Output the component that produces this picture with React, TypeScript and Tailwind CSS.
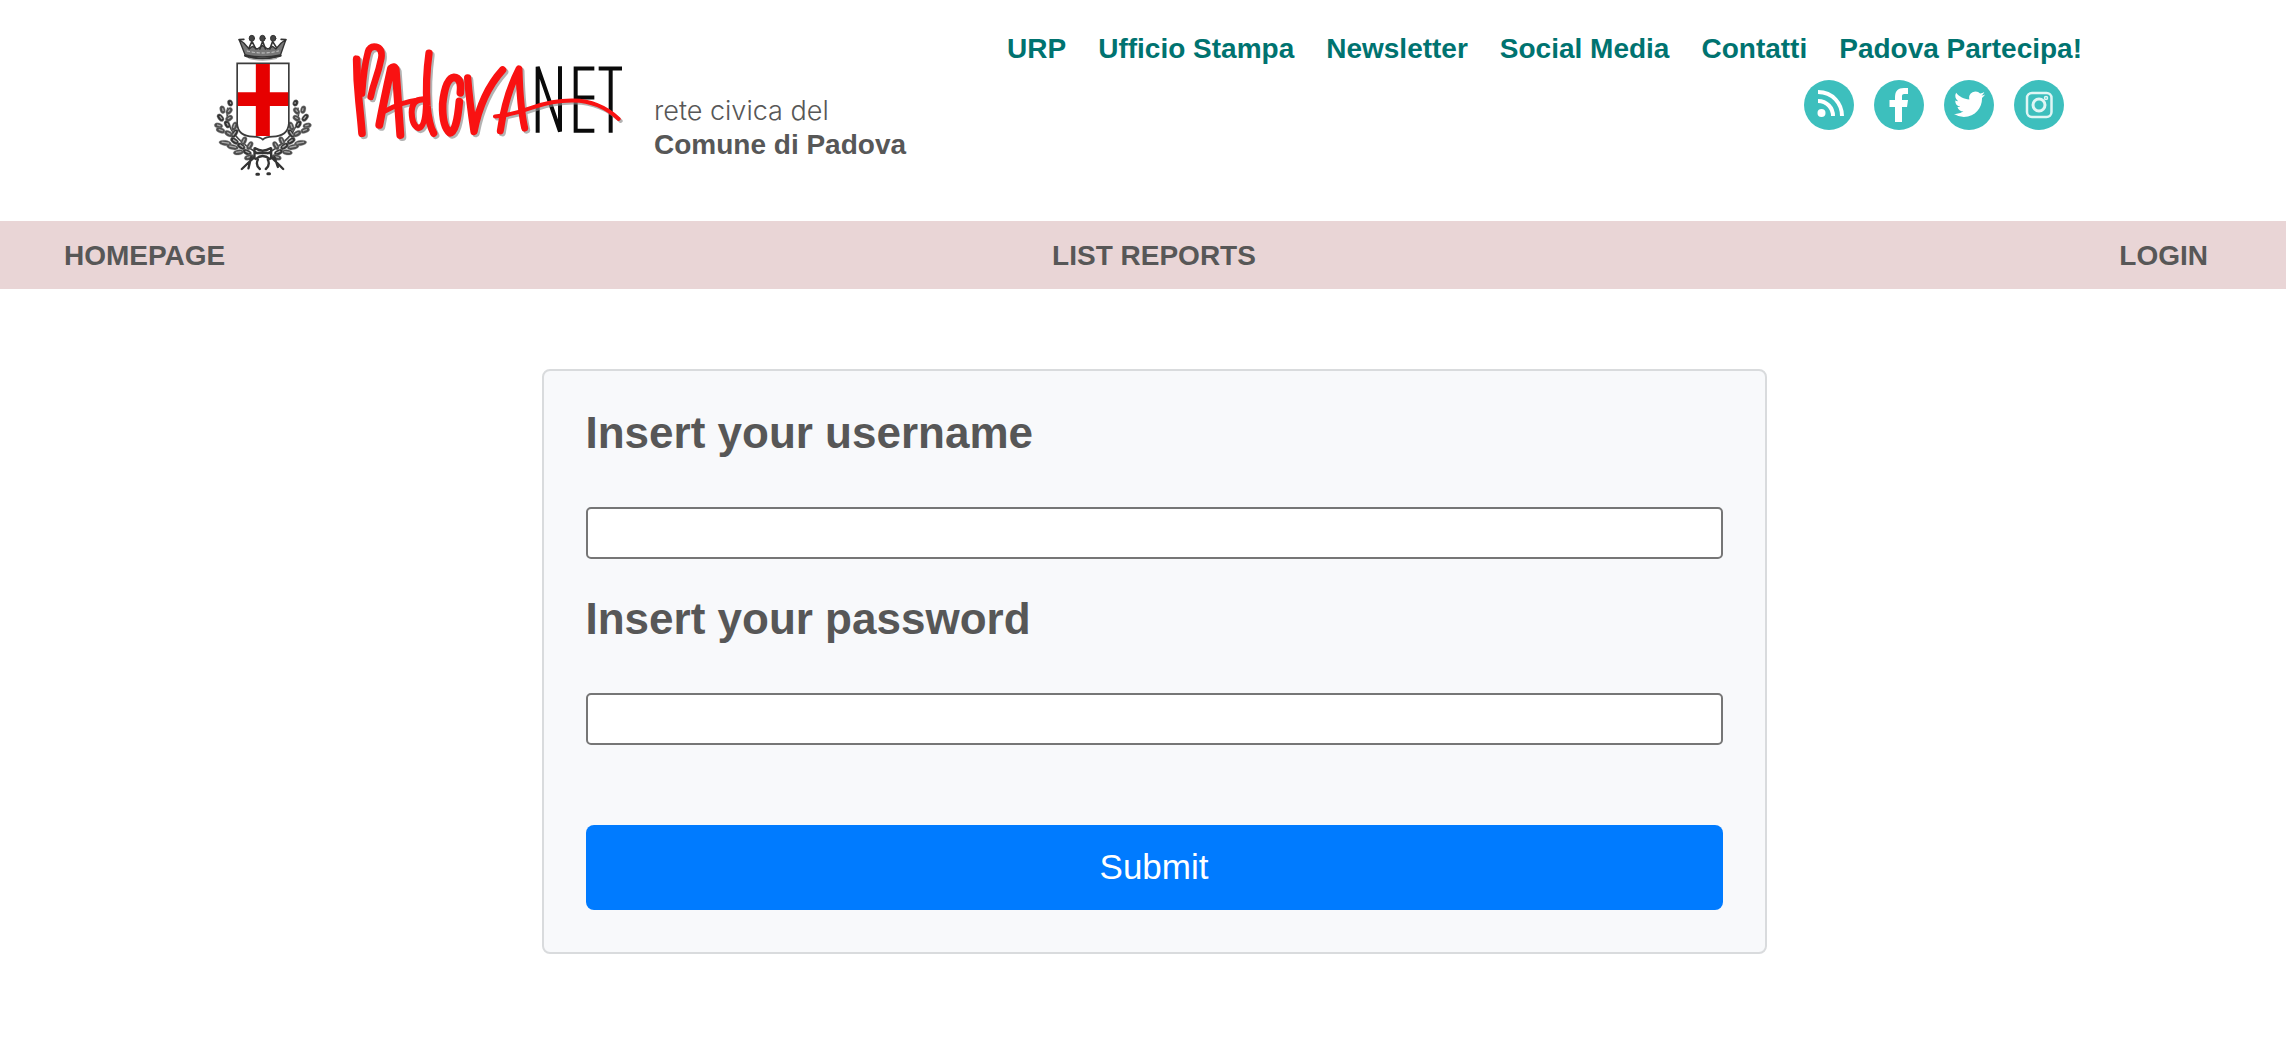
import React from "react";

const links = ["URP", "Ufficio Stampa", "Newsletter", "Social Media", "Contatti", "Padova Partecipa!"];

// Leaves of the left laurel branch: centre x, centre y, rotation, length
const leaves: [number, number, number, number][] = [
  [91, 248, 70, 10], [68, 268, 75, 12], [88, 272, -50, 12], [62, 292, 50, 13], [88, 294, -30, 12],
  [56, 316, 15, 13], [82, 312, 60, 12], [104, 318, -70, 14], [62, 330, 20, 14], [104, 340, -55, 15],
  [86, 340, 30, 13], [76, 368, 8, 19], [104, 362, 35, 14], [132, 362, -65, 14], [98, 380, 12, 18],
  [124, 378, 35, 14], [150, 376, -60, 14], [116, 396, -8, 16], [142, 396, 25, 14], [148, 411, -15, 15],
];

function Branch() {
  return (
    <g>
      <path d="M84 262C76 300 88 350 176 400" fill="none" stroke="#444" strokeWidth="5" />
      {leaves.map(([x, y, r, l], i) => (
        <g key={i} transform={`translate(${x} ${y}) rotate(${r})`}>
          <ellipse rx={l} ry="8" fill={i % 3 === 0 ? "#333" : "#4c4c4c"} stroke="#999" strokeWidth="1" />
          <path d={`M${-l + 8} -1H${l - 7}`} stroke="#a8a8a8" strokeWidth="4" />
        </g>
      ))}
    </g>
  );
}

function Crest() {
  return (
    <svg viewBox="40 38 296 432" className="h-36 w-[99px] shrink-0" role="img" aria-label="Comune di Padova">
      <g stroke="#333" fill="none" strokeLinejoin="round" strokeLinecap="round">
        <path d="M118 58L136 104Q188 116 242 104L258 58L244 68L228 86L218 78L204 86L188 76L172 86L158 78L148 86L132 68Z" fill="#777" strokeWidth="4" />
        <path d="M136 106Q188 124 242 106" strokeWidth="7" />
        <path d="M142 92Q188 104 236 92" stroke="#ccc" strokeWidth="3" strokeDasharray="7 8" />
        <path d="M148 82L156 64M168 86L158 66M180 86L188 64M197 86L189 64M210 86L218 64M230 82L220 66" strokeWidth="5" />
        <path d="M118 58L132 57M258 58L244 57" strokeWidth="5" />
        <g fill="#444" strokeWidth="3">
          <ellipse cx="156" cy="54" rx="8" ry="9" />
          <ellipse cx="188" cy="54" rx="8" ry="9" />
          <ellipse cx="220" cy="54" rx="8" ry="9" />
        </g>
        <path d="M148 114Q188 124 230 114" stroke="#aaa" strokeWidth="4" />
      </g>
      <Branch />
      <g transform="translate(378 0) scale(-1 1)">
        <Branch />
      </g>
      <path d="M112 129H267V310Q264 348 218 349Q198 349 189 358Q180 349 160 349Q114 348 112 310Z" fill="#fff" stroke="#3c3c3c" strokeWidth="5" />
      <path d="M168 131H210V216H265V257H210V347H168V257H114V216H168Z" fill="#e60000" />
      <g fill="none" stroke="#333" strokeWidth="7" strokeLinecap="round">
        <path d="M166 384Q188 398 212 384M168 416Q188 398 210 416M164 384V414M214 384V414M168 398H210" />
        <path d="M162 412L126 446M216 412L250 446M154 410L146 444M224 410L234 440" />
        <path d="M174 418Q166 434 180 446M204 418Q212 434 198 446" />
        <path d="M171 462H176M204 460H209" strokeWidth="9" />
      </g>
    </svg>
  );
}

function Brush() {
  return (
    <g fill="none" strokeLinecap="round" strokeLinejoin="round">
      <path d="M50 90Q50 150 57 215T66 307" strokeWidth="23" />
      <path d="M46 84L51 108" strokeWidth="11" />
      <path d="M66 190Q72 110 84 68Q90 50 108 53Q128 58 124 86Q118 116 106 150Q98 172 92 200" strokeWidth="20" />
      <path d="M118 282Q132 210 153 117Q162 108 167 120Q174 220 181 312" strokeWidth="24" />
      <path d="M136 242Q178 216 252 206" strokeWidth="14" />
      <path d="M267 72Q256 150 261 225Q266 280 281 307" strokeWidth="22" />
      <path d="M250 208Q216 206 215 246Q216 286 236 292Q256 288 258 220" strokeWidth="18" />
      <path d="M361 188Q366 144 342 143Q316 146 308 220Q306 288 330 306Q350 304 358 214" strokeWidth="23" />
      <path d="M383 145Q388 210 402 302Q424 190 488 121" strokeWidth="22" />
      <path d="M481 300Q496 196 537 118Q540 230 554 292" strokeWidth="21" />
      <path d="M465 258Q520 252 576 232Q640 210 700 211Q778 212 836 265" strokeWidth="12" />
    </g>
  );
}

function Wordmark() {
  return (
    <svg viewBox="36 36 816 294" preserveAspectRatio="none" className="h-[100px] w-[272px] shrink-0" role="img" aria-label="Padovanet">
      <g fill="none" stroke="#0a0a0a" strokeWidth="12">
        <path d="M593 306V112L660 302V110" strokeLinejoin="bevel" />
        <path d="M763 117H707V300H763M707 202H763" />
        <path d="M776 117H846M812 117V306" />
      </g>
      <g transform="translate(6 6)" stroke="#8b8b8b" opacity="0.65">
        <Brush />
      </g>
      <g stroke="#f91212">
        <Brush />
      </g>
    </svg>
  );
}

const social: [string, React.ReactNode][] = [
  ["RSS", (
    <g fill="none" stroke="#fff" strokeWidth="4">
      <path d="M14 12C29 12 38 24 38 36" />
      <path d="M14 21C23 21 29 28 29 36" />
      <circle cx="17.500" cy="33" r="4" fill="#fff" stroke="none" />
    </g>
  )],
  ["Facebook", <path d="M21 42V27H15.500V20H21V17C21 11 24 8 30 8H34V14H31C28 14 28 15 28 17V20H34L33 27H28V42Z" fill="#fff" />],
  ["Twitter", <path transform="translate(10 8.600) scale(1.300)" d="M23.950 4.570a10 10 0 0 1-2.820.780 4.960 4.960 0 0 0 2.160-2.730c-.950.560-2 .960-3.130 1.190a4.920 4.920 0 0 0-8.380 4.480C7.690 8.100 4.070 6.130 1.640 3.160a4.920 4.920 0 0 0 1.520 6.570 4.900 4.900 0 0 1-2.230-.610v.060a4.920 4.920 0 0 0 3.950 4.830 5 5 0 0 1-2.210.080 4.940 4.940 0 0 0 4.600 3.420A9.870 9.870 0 0 1 0 19.540a13.990 13.990 0 0 0 7.550 2.210c9.050 0 14-7.500 14-13.980 0-.210 0-.420-.020-.630a9.940 9.940 0 0 0 2.460-2.550z" fill="#fff" />],
  ["Instagram", (
    <g fill="none" stroke="#e0f6f5" strokeWidth="2.500">
      <rect x="13" y="13" width="24.500" height="24" rx="5" />
      <circle cx="25" cy="25" r="6" strokeWidth="3" />
      <circle cx="32" cy="18" r="1.500" strokeWidth="1.500" />
    </g>
  )],
];

export default function App() {
  return (
    <div className="min-h-screen bg-white font-['Liberation_Sans',Arial,sans-serif] text-[#575757]">
      <header className="flex items-start justify-between pt-[33px] pr-[204px] pb-11 pl-[213px]">
        <div className="flex items-start">
          <Crest />
          <div className="ml-10 pt-2">
            <Wordmark />
          </div>
          <p className="ml-[30px] pt-[61px] text-[28px] leading-[34px]">
            <span className="block font-['Inter',sans-serif] text-[27px] font-light">rete civica del</span>
            <strong className="block">Comune di Padova</strong>
          </p>
        </div>
        <div className="flex flex-col items-end gap-[15px]">
          <nav aria-label="Servizi" className="flex gap-8 text-[28px] leading-8 font-bold whitespace-nowrap text-[#007370]">
            {links.map((label) => (
              <a key={label} href="#">{label}</a>
            ))}
          </nav>
          <div className="mr-[18px] flex gap-5">
            {social.map(([label, icon]) => (
              <a key={label} href="#" aria-label={label}>
                <svg viewBox="0 0 50 50" className="size-[50px]">
                  <circle cx="25" cy="25" r="25" fill="#3dbfbd" />
                  {icon}
                </svg>
              </a>
            ))}
          </div>
        </div>
      </header>

      <nav aria-label="Menu" className="grid grid-cols-3 bg-[#e9d5d6] pt-[18px] pr-[42px] pb-4 pl-16 text-[28px] leading-[34px] font-bold">
        <a href="#">HOMEPAGE</a>
        <a href="#" className="text-center">LIST REPORTS</a>
        <a href="#" className="pr-9 text-right">LOGIN</a>
      </nav>

      <main className="flex justify-center py-20 pr-[42px] pl-16">
        <form className="flex w-full max-w-[1225px] flex-col rounded-lg border-2 border-[#d9dbdd] bg-[#f8f9fb] px-[42px] pt-10 pb-[42px]" onSubmit={(e) => e.preventDefault()}>
          <label htmlFor="username" className="text-[44px] leading-[44px] font-bold">Insert your username</label>
          <input id="username" type="text" className="mt-[52px] h-[52px] rounded-[5px] border-2 border-[#767676] bg-white px-2 text-[28px]" />
          <label htmlFor="password" className="mt-[38px] text-[44px] leading-[44px] font-bold">Insert your password</label>
          <input id="password" type="password" className="mt-[52px] h-[52px] rounded-[5px] border-2 border-[#767676] bg-white px-2 text-[28px]" />
          <button type="submit" className="mt-20 h-[85px] rounded-lg bg-[#007bff] text-[35px] text-white">Submit</button>
        </form>
      </main>
    </div>
  );
}
